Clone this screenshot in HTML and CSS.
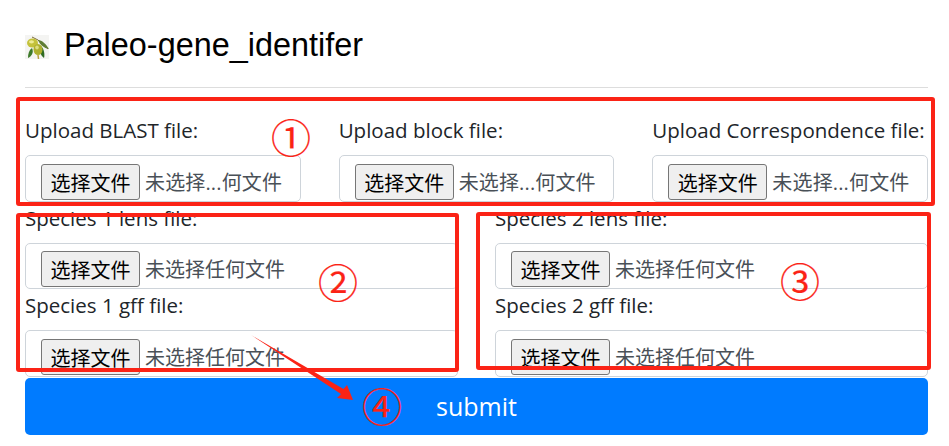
FILE: index.html
```html
<!DOCTYPE html>
<html lang="en">
<head>
    <meta charset="UTF-8">
    <meta name="viewport" content="width=device-width, initial-scale=1.0">
    <title>Paleo-gene_identifer</title>
    <link rel="stylesheet" href="styles.css">
</head>
<body>

<div class="page">
    <header class="title-bar">
        <svg class="logo" width="24" height="24" viewBox="0 0 24 24">
            <rect width="24" height="24" fill="#f4f4f2"/>
            <path d="M7 2 L13 5 L23 14" fill="none" stroke="#7a6a3a" stroke-width="1"/>
            <path d="M13 5 C17 5 21 9 24 14 C19 13 15 10 13 5Z" fill="#5f7d35"/>
            <path d="M16 11 C19 14 20 19 19 23 C15 20 14 15 16 11Z" fill="#2f6a22"/>
            <path d="M7 13 C4 15 3 19 3 23 C7 21 9 17 7 13Z" fill="#3d7a2a"/>
            <ellipse cx="7.5" cy="8" rx="5.5" ry="4.5" fill="#c4c23c"/>
            <ellipse cx="6.5" cy="6.8" rx="2.5" ry="1.6" fill="#eeec96"/>
            <ellipse cx="13" cy="14.5" rx="4.5" ry="5.5" fill="#aeb02e"/>
            <ellipse cx="12" cy="12.5" rx="1.8" ry="2" fill="#dede80"/>
            <path d="M13 20 L13.5 24" stroke="#b8a040" stroke-width="1.5"/>
        </svg>
        <h1>Paleo-gene_identifer</h1>
    </header>
    <hr class="rule">

    <form class="upload-form">
        <div class="row row-three">
            <div class="field">
                <label>Upload BLAST file:</label>
                <div class="file-input"><button type="button">选择文件</button><span class="cut">未选择...何文件</span></div>
            </div>
            <div class="field">
                <label>Upload block file:</label>
                <div class="file-input"><button type="button">选择文件</button><span class="cut">未选择...何文件</span></div>
            </div>
            <div class="field">
                <label>Upload Correspondence file:</label>
                <div class="file-input"><button type="button">选择文件</button><span class="cut">未选择...何文件</span></div>
            </div>
        </div>
        <div class="row row-two">
            <div class="field">
                <label>Species 1 lens file:</label>
                <div class="file-input"><button type="button">选择文件</button><span>未选择任何文件</span></div>
            </div>
            <div class="field">
                <label>Species 2 lens file:</label>
                <div class="file-input"><button type="button">选择文件</button><span>未选择任何文件</span></div>
            </div>
            <div class="field">
                <label>Species 1 gff file:</label>
                <div class="file-input"><button type="button">选择文件</button><span>未选择任何文件</span></div>
            </div>
            <div class="field">
                <label>Species 2 gff file:</label>
                <div class="file-input"><button type="button">选择文件</button><span>未选择任何文件</span></div>
            </div>
        </div>
        <button type="button" class="submit">submit</button>
    </form>

    <!-- red notes drawn over the screenshot -->
    <div class="box box-1"></div>
    <div class="box box-2"></div>
    <div class="box box-3"></div>
    <span class="num num-1">①</span>
    <span class="num num-2">②</span>
    <span class="num num-3">③</span>
    <span class="num num-4">④</span>
    <svg class="arrow" width="110" height="75" viewBox="0 0 110 75">
        <path d="M0 1 L92.5 55 L96 51 L102 66 L86 64 L90 60 Z" fill="#fb2316"/>
    </svg>
</div>

</body>
</html>
```

FILE: styles.css
```css
* {
    box-sizing: border-box;
}
body {
    margin: 0;
    background-color: white;
    font-family: "Open Sans", "Noto Sans CJK SC", sans-serif;
    font-size: 20px;
    color: #212529;
}
.page {
    position: relative;
    height: 446px;
    padding: 0 21px 0 25px;
    overflow: hidden;
}
.title-bar {
    display: flex;
    align-items: center;
    gap: 15px;
    height: 87px;
    padding-top: 3px;
}
.logo {
    margin-top: 3px;
}
.title-bar h1 {
    margin: 0;
    font-family: "Liberation Sans", Arial, sans-serif;
    font-size: 32.4px;
    font-weight: normal;
    color: black;
}
.rule {
    margin: 0 0 28px;
    border: none;
    border-top: 1px solid #dddddd;
}
.row {
    display: grid;
}
.row-three {
    column-gap: 38px;
    grid-template-columns: repeat(3, 1fr);
}
.row-two {
    column-gap: 37px;
    grid-template-columns: repeat(2, 1fr);
}
.field {
    margin-bottom: 2px;
}
.field label {
    display: block;
    height: 28px;
    line-height: 28px;
    margin-bottom: 11px;
    font-size: 20.5px;
    white-space: nowrap;
}
.file-input {
    display: flex;
    align-items: flex-start;
    height: 47px;
    padding: 8px 15px 0;
    border: 1px solid #ced4da;
    border-radius: 5px;
    color: #495057;
    white-space: nowrap;
}
.row-two .field:nth-child(-n+2) .file-input {
    height: 46px;
    padding-top: 7px;
}
.file-input button {
    width: 99px;
    height: 36px;
    margin-right: 5px;
    padding: 0;
    background-color: #efefef;
    border: 1px solid #767676;
    border-radius: 3px;
    font-family: inherit;
    font-size: 20px;
    color: black;
}
.file-input span {
    line-height: 38px;
}
.file-input .cut {
    letter-spacing: 0.15px;
}
.submit {
    display: block;
    width: 100%;
    height: 57px;
    margin-top: -1px;
    padding: 0 0 2px;
    background-color: #007bff;
    border: none;
    border-radius: 5px;
    font-family: inherit;
    font-size: 25px;
    color: white;
}
.box {
    position: absolute;
    border: 4px solid #fb2316;
    border-radius: 3px;
}
.box-1 {
    left: 16px;
    top: 97px;
    width: 919px;
    height: 109px;
}
.box-2 {
    left: 16px;
    top: 213px;
    width: 443px;
    height: 159px;
}
.box-3 {
    left: 476px;
    top: 212px;
    width: 455px;
    height: 158px;
}
.num {
    position: absolute;
    font-family: "Noto Sans CJK SC", sans-serif;
    font-size: 40px;
    line-height: 40px;
    color: #fb2316;
    -webkit-text-stroke: 0.2px #fb2316;
}
.num-1 {
    left: 271px;
    top: 116px;
}
.num-2 {
    left: 318px;
    top: 261px;
}
.num-3 {
    left: 780px;
    top: 260px;
}
.num-4 {
    left: 362px;
    top: 385px;
}
.arrow {
    position: absolute;
    left: 251px;
    top: 334px;
}
```
